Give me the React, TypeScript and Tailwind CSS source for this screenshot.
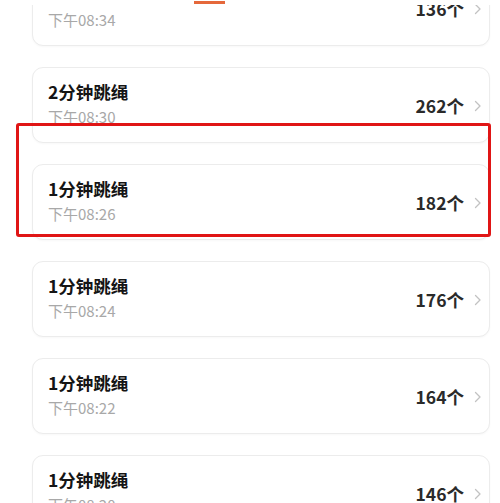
import * as React from "react";

type Record = { title: string; time: string; count: number };

const records: Record[] = [
  { title: "1分钟跳绳", time: "下午08:34", count: 136 },
  { title: "2分钟跳绳", time: "下午08:30", count: 262 },
  { title: "1分钟跳绳", time: "下午08:26", count: 182 },
  { title: "1分钟跳绳", time: "下午08:24", count: 176 },
  { title: "1分钟跳绳", time: "下午08:22", count: 164 },
  { title: "1分钟跳绳", time: "下午08:20", count: 146 },
];

function Chevron() {
  return (
    <svg width="8" height="12" viewBox="0 0 8 12" fill="none" aria-hidden>
      <path d="M1.5 1.5 6 6l-4.5 4.5" stroke="#c2c2c2" strokeWidth="1.3" strokeLinecap="round" strokeLinejoin="round" />
    </svg>
  );
}

function RecordCard({ r }: { r: Record }) {
  return (
    <div className="flex h-[76px] shrink-0 rounded-[11px] border border-[#ececec] bg-white pl-[15px] pr-[7px] shadow-[0_1px_2px_rgba(0,0,0,0.03)]">
      <div className="flex flex-1 flex-col pt-[14px]">
        <span className="text-[17.5px] font-bold leading-[20px] text-[#151515]">{r.title}</span>
        <span className="mt-[3px] text-[15px] leading-[24px] text-[#a8a8a8]">{r.time}</span>
      </div>
      <div className="flex items-center gap-[10px] pt-[2px]">
        <span className="text-[17.5px] font-bold text-[#2a2a2a]">{r.count}个</span>
        <Chevron />
      </div>
    </div>
  );
}

export default function App() {
  return (
    <div
      className="relative h-[503px] w-[500px] overflow-hidden bg-white"
      style={{ fontFamily: '"Noto Sans CJK SC", "Noto Sans", sans-serif' }}
    >
      <div className="mt-[-30px] flex flex-col gap-[21px] pl-[32px] pr-[10px]">
        {records.map((r, i) => (
          <RecordCard key={i} r={r} />
        ))}
      </div>

      {/* tab bar edge with active indicator */}
      <div className="absolute inset-x-0 top-0 h-[5px] bg-white">
        <div className="ml-[194px] mt-[1px] h-[3px] w-[31px] bg-[#e5683b]" />
      </div>

      {/* highlight box */}
      <div className="absolute left-[16px] top-[123px] h-[114px] w-[475px] rounded-[3px] border-[3px] border-[#e01515]" />
    </div>
  );
}
